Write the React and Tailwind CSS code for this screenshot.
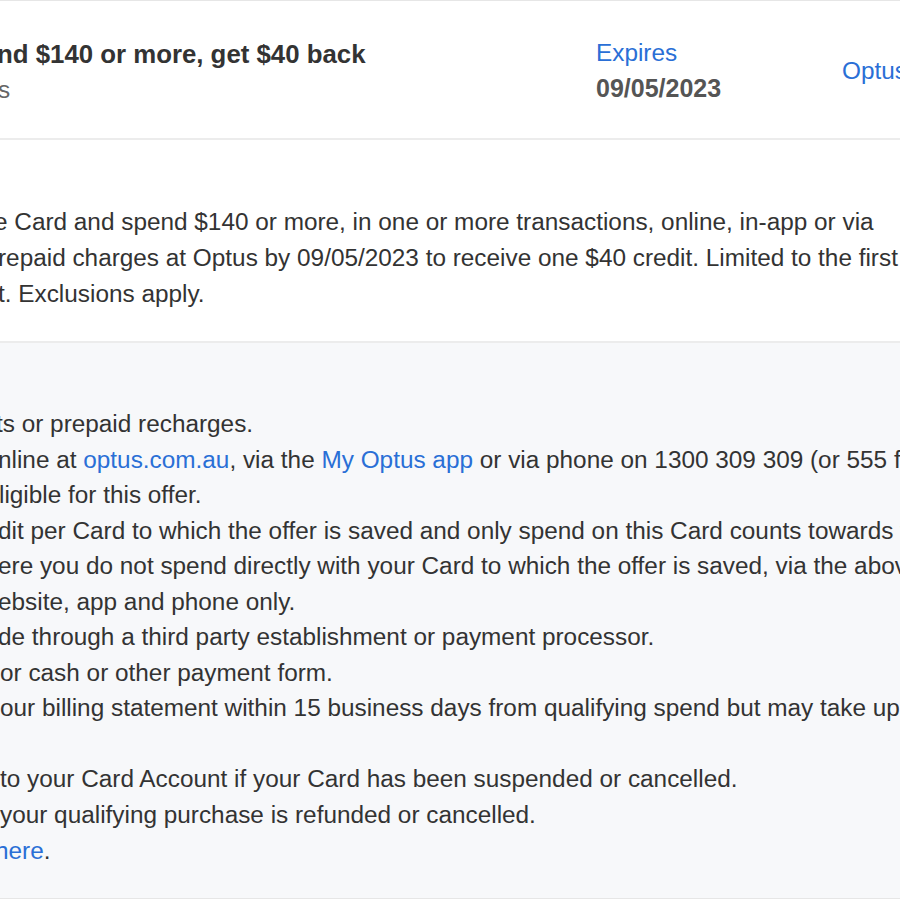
import React from "react";

const font = { fontFamily: '"Liberation Sans", Arial, Helvetica, sans-serif' };

function Line({ ml = "", children }) {
  return <div className={`whitespace-nowrap h-[35.55px] leading-[35.55px] ${ml}`}>{children}</div>;
}

const A = ({ children }) => <span className="text-[#2a6fd6]">{children}</span>;

export default function App() {
  return (
    <div className="w-[900px] h-[900px] overflow-hidden bg-white text-[24.35px] text-[#333]" style={font}>
      <div className="border-t border-[#e6e6e6]" />
      {/* header */}
      <div className="flex h-[139px] border-b-2 border-[#ececec]">
        <div className="w-[596px] pt-[35px] shrink-0">
          <div className="whitespace-nowrap font-bold text-[25.8px] leading-[36px] -ml-[3px]">nd $140 or more, get $40 back</div>
          <div className="whitespace-nowrap leading-[36px] text-[#666] -ml-[2px]">s</div>
        </div>
        <div className="w-[246px] pt-[34px] shrink-0">
          <div className="leading-[36px] text-[#2a6fd6]">Expires</div>
          <div className="leading-[34px] font-bold text-[25px] text-[#555]">09/05/2023</div>
        </div>
        <div className="pt-[52px] whitespace-nowrap leading-[36px] text-[#2a6fd6]">Optus</div>
      </div>
      {/* description */}
      <div className="pt-[64px] pb-[29px] border-b-2 border-[#ececec]">
        <div className="whitespace-nowrap leading-[36px] -ml-[6px]">e Card and spend $140 or more, in one or more transactions, online, in-app or via</div>
        <div className="whitespace-nowrap leading-[36px] -ml-[2px]">repaid charges at Optus by 09/05/2023 to receive one $40 credit. Limited to the first</div>
        <div className="whitespace-nowrap leading-[36px] -ml-[2px]">t. Exclusions apply.</div>
      </div>
      {/* terms */}
      <div className="bg-[#f7f8fa] pt-[63px] h-[556px] border-b border-[#e6e6e6]">
        <Line ml="-ml-[4px]">ts or prepaid recharges.</Line>
        <Line ml="-ml-[2px]">nline at <A>optus.com.au</A>, via the <A>My Optus app</A> or via phone on 1300 309 309 (or 555 from your mobile)</Line>
        <Line ml="-ml-[1px]">ligible for this offer.</Line>
        <Line ml="-ml-[2px]">dit per Card to which the offer is saved and only spend on this Card counts towards the</Line>
        <Line ml="-ml-[2px]">ere you do not spend directly with your Card to which the offer is saved, via the above</Line>
        <Line ml="-ml-[2px]">ebsite, app and phone only.</Line>
        <Line ml="-ml-[2px]">de through a third party establishment or payment processor.</Line>
        <Line ml="ml-0">or cash or other payment form.</Line>
        <Line ml="ml-0">our billing statement within 15 business days from qualifying spend but may take up to</Line>
        <Line ml="ml-0">&nbsp;</Line>
        <Line ml="ml-0">to your Card Account if your Card has been suspended or cancelled.</Line>
        <Line ml="ml-0">your qualifying purchase is refunded or cancelled.</Line>
        <Line ml="-ml-[5px]"><A>here</A>.</Line>
      </div>
    </div>
  );
}
